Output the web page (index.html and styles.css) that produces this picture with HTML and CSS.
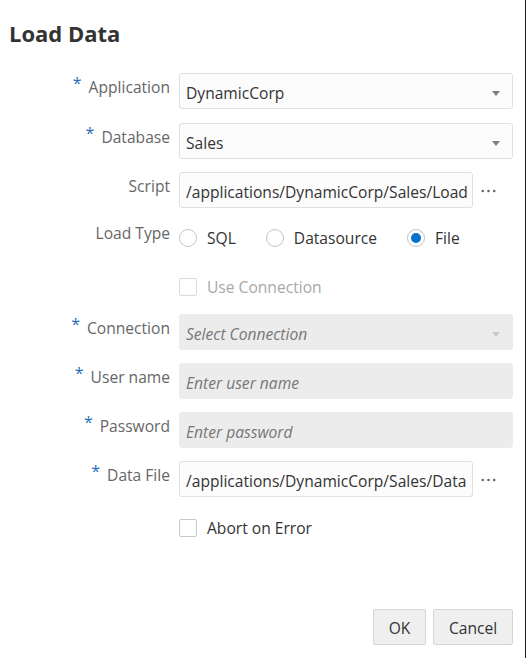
FILE: index.html
```html
<!DOCTYPE html>
<html lang="en">
<head>
<meta charset="utf-8">
<title>Load Data</title>
<link rel="stylesheet" href="styles.css">
</head>
<body>
<div class="dialog">
  <h1 class="title">Load Data</h1>
  <form class="form">
    <div class="row row-first">
      <label class="label"><span class="req">*</span>Application</label>
      <div class="control select">
        <span class="value">DynamicCorp</span>
        <span class="arrow"></span>
      </div>
    </div>
    <div class="row">
      <label class="label"><span class="req">*</span>Database</label>
      <div class="control select">
        <span class="value">Sales</span>
        <span class="arrow"></span>
      </div>
    </div>
    <div class="row">
      <label class="label">Script</label>
      <div class="control input short"><span class="value">/applications/DynamicCorp/Sales/Load</span></div>
      <span class="more"><svg width="15" height="4" viewBox="0 0 15 4"><circle cx="1.8" cy="2" r="1.3"/><circle cx="7.5" cy="2" r="1.3"/><circle cx="13.2" cy="2" r="1.3"/></svg></span>
    </div>
    <div class="row row-radio">
      <label class="label label-mid">Load Type</label>
      <div class="radios">
        <span class="radio-item"><span class="radio"></span>SQL</span>
        <span class="radio-item"><span class="radio"></span>Datasource</span>
        <span class="radio-item"><span class="radio checked"></span>File</span>
      </div>
    </div>
    <div class="row row-check">
      <span class="label"></span>
      <span class="check-item disabled"><span class="checkbox"></span>Use Connection</span>
    </div>
    <div class="row">
      <label class="label"><span class="req">*</span>Connection</label>
      <div class="control select disabled-field">
        <span class="value placeholder">Select Connection</span>
        <span class="arrow light"></span>
      </div>
    </div>
    <div class="row">
      <label class="label"><span class="req">*</span>User name</label>
      <div class="control disabled-field"><span class="value placeholder">Enter user name</span></div>
    </div>
    <div class="row">
      <label class="label"><span class="req">*</span>Password</label>
      <div class="control disabled-field"><span class="value placeholder">Enter password</span></div>
    </div>
    <div class="row">
      <label class="label"><span class="req">*</span>Data File</label>
      <div class="control input short"><span class="value">/applications/DynamicCorp/Sales/Data</span></div>
      <span class="more"><svg width="15" height="4" viewBox="0 0 15 4"><circle cx="1.8" cy="2" r="1.3"/><circle cx="7.5" cy="2" r="1.3"/><circle cx="13.2" cy="2" r="1.3"/></svg></span>
    </div>
    <div class="row row-check2">
      <span class="label"></span>
      <span class="check-item"><span class="checkbox"></span>Abort on Error</span>
    </div>
  </form>
  <div class="footer">
    <button class="btn btn-ok" type="button">OK</button>
    <button class="btn btn-cancel" type="button">Cancel</button>
  </div>
</div>
</body>
</html>
```
FILE: styles.css
```css
html, body {
  margin: 0;
  padding: 0;
  background: #fff;
}
body {
  font-family: "Open Sans", "Noto Sans", sans-serif;
  color: #333;
  width: 527px;
  height: 658px;
  overflow: hidden;
}
.dialog {
  width: 526px;
  height: 658px;
  border-right: 1px solid #1a1a1a;
  box-sizing: border-box;
  padding: 0 12px 0 9px;
  display: flex;
  flex-direction: column;
}
.title {
  margin: 17px 0 0 0;
  font-size: 22px;
  line-height: 32px;
  font-weight: 700;
  color: #333;
}
.form {
  margin-top: 24px;
  display: flex;
  flex-direction: column;
}
.row {
  display: flex;
  align-items: flex-start;
  margin-bottom: 13px;
}
.row-first { margin-bottom: 14px; }
.label {
  width: 170px;
  flex: 0 0 170px;
  box-sizing: border-box;
  padding-right: 9px;
  text-align: right;
  font-size: 15.6px;
  line-height: 20px;
  padding-top: 4px;
  color: #666;
  white-space: nowrap;
}
.label-mid { padding-top: 1px; }
.req {
  color: #1f6fb5;
  font-size: 16px;
  position: relative;
  top: -4px;
  margin-right: 7px;
}
.control {
  box-sizing: border-box;
  flex: 0 0 334px;
  width: 334px;
  height: 36px;
  border: 1px solid #e0e0e0;
  border-radius: 3px;
  background: #fcfcfc;
  display: flex;
  align-items: center;
  padding: 0 6px;
  position: relative;
  font-size: 15.6px;
  color: #333;
  white-space: nowrap;
}
.control.short { flex-basis: 294px; width: 294px; overflow: hidden; }
.control .value { padding-top: 3px; }
.select .arrow {
  position: absolute;
  right: 12px;
  top: 17px;
  width: 0;
  height: 0;
  border-left: 4.5px solid transparent;
  border-right: 4.5px solid transparent;
  border-top: 5px solid #808080;
}
.select .arrow.light { border-top-color: #c8c8c8; }
.disabled-field {
  background: #ececec;
  border-color: #ececec;
}
.placeholder {
  font-style: italic;
  color: #777;
}
.more {
  display: flex;
  align-items: center;
  height: 36px;
  margin-left: 8px;
  padding-top: 1px;
  fill: #666;
}
.row-radio {
  height: 32px;
  align-items: flex-start;
  margin-bottom: 15px;
}
.radios {
  display: flex;
  align-items: center;
  height: 32px;
  font-size: 15.6px;
  color: #333;
}
.radio-item {
  display: flex;
  align-items: center;
  margin-right: 30px;
}
.radio {
  box-sizing: border-box;
  width: 18px;
  height: 18px;
  border: 1px solid #c4c4c4;
  border-radius: 50%;
  margin-right: 10px;
  background: #fff;
  position: relative;
}
.radio.checked::after {
  content: "";
  position: absolute;
  left: 3px;
  top: 3px;
  width: 10px;
  height: 10px;
  border-radius: 50%;
  background: #0572ce;
}
.row-check {
  height: 36px;
  align-items: center;
  margin-bottom: 9px;
}
.row-check2 {
  height: 36px;
  align-items: center;
  margin-top: -1px;
}
.check-item {
  display: flex;
  align-items: center;
  font-size: 15.6px;
  color: #333;
}
.check-item.disabled { color: #a8a8a8; }
.checkbox {
  box-sizing: border-box;
  width: 18px;
  height: 18px;
  border: 1px solid #c8c8c8;
  border-radius: 2px;
  background: #fff;
  margin-right: 10px;
}
.check-item.disabled .checkbox { border-color: #dadada; }
.footer {
  margin-top: auto;
  margin-bottom: 13px;
  display: flex;
  justify-content: flex-end;
  gap: 7px;
}
.btn {
  font-family: "Open Sans", "Noto Sans", sans-serif;
  font-size: 15.6px;
  color: #333;
  height: 36px;
  background: #efefef;
  border: 1px solid #d6d6d6;
  border-radius: 2px;
  padding: 2px 0 0 0;
}
.btn-ok { width: 53px; }
.btn-cancel { width: 80px; }
```
